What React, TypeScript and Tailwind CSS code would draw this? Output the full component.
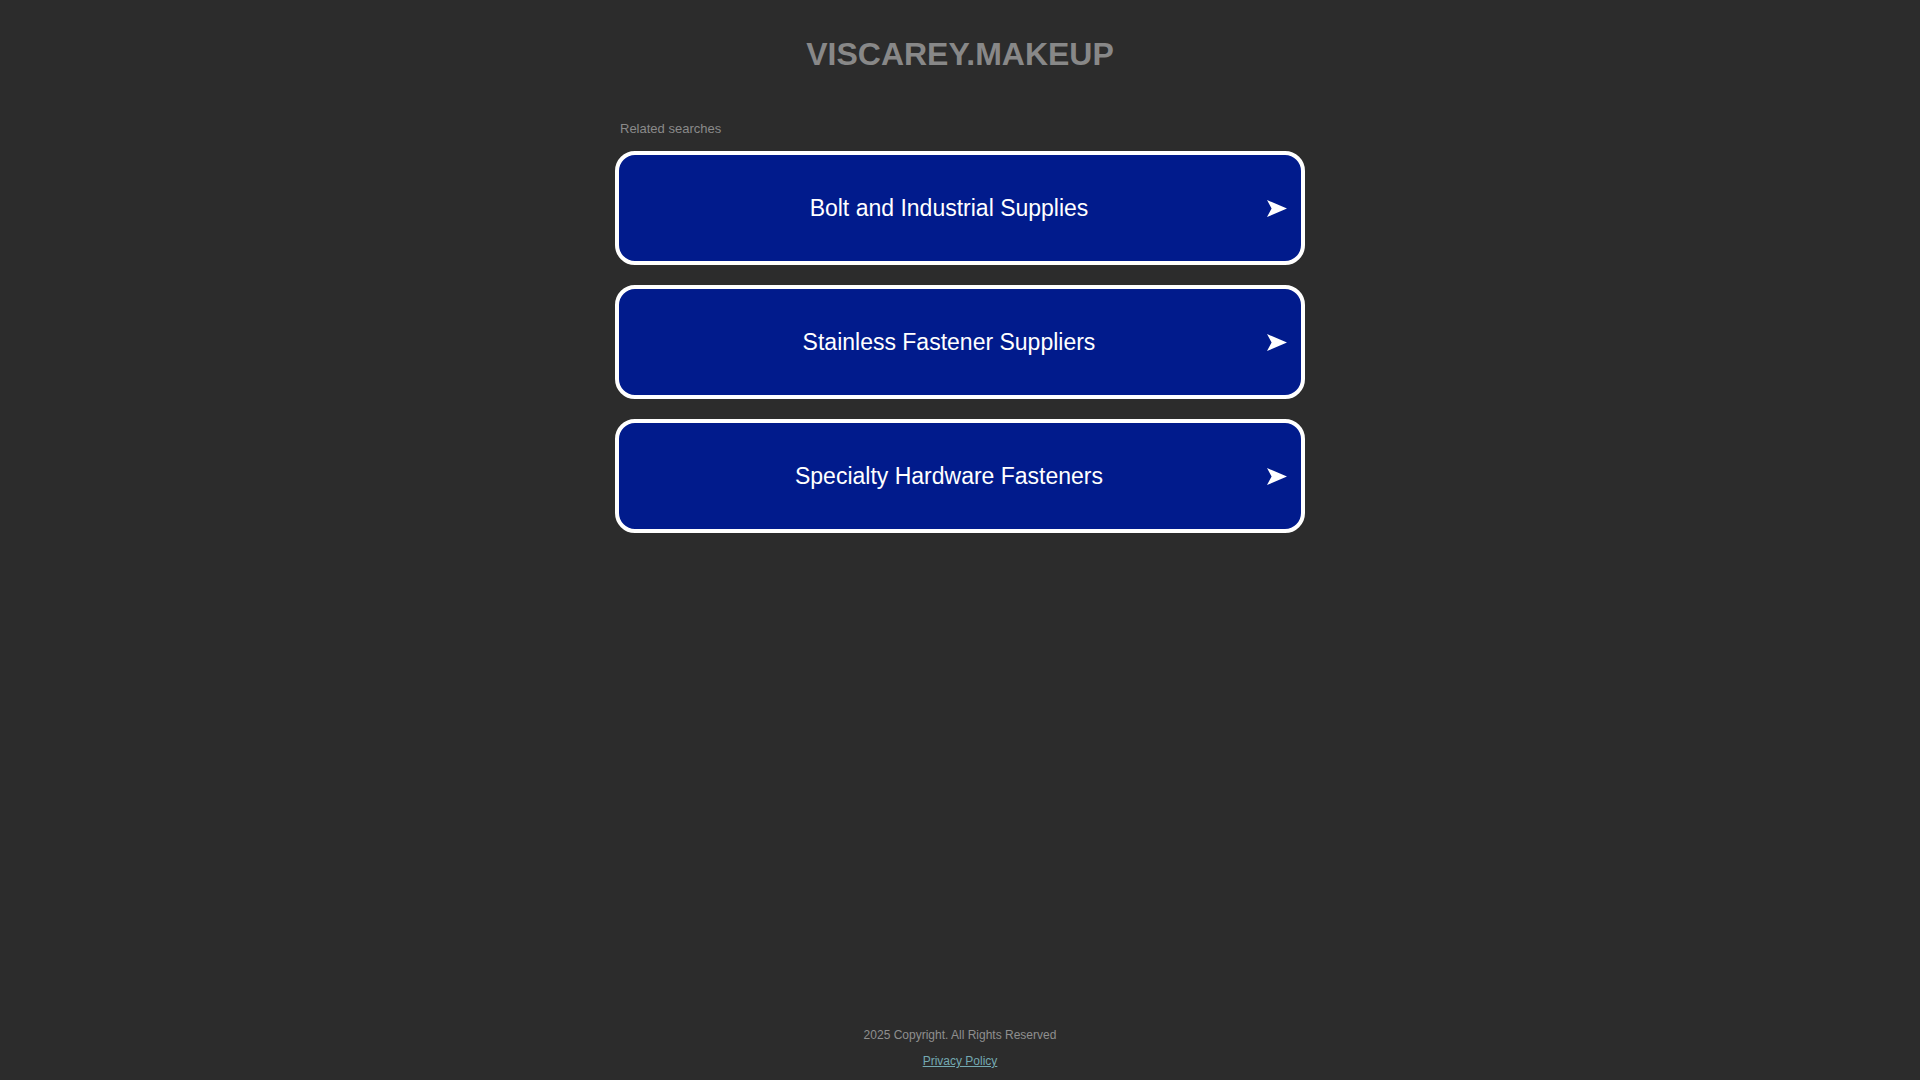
import React from "react";

const searches = [
  "Bolt and Industrial Supplies",
  "Stainless Fastener Suppliers",
  "Specialty Hardware Fasteners",
];

function Arrow() {
  return (
    <svg width="20" height="17" viewBox="0 0 20 17" className="shrink-0">
      <path d="M0 0 L20 8.5 L0 17 L4.6 8.5 Z" fill="#ffffff" />
    </svg>
  );
}

export default function App(): React.JSX.Element {
  return (
    <div className="min-h-screen bg-[#2c2c2c] flex flex-col items-center font-['Liberation_Sans',Arial,sans-serif]">
      <h1 className="mt-[36px] text-[32px] leading-[36px] font-bold text-[#888888]">
        VISCAREY.MAKEUP
      </h1>

      <div className="w-[690px] mt-[49px]">
        <p className="pl-[5px] mb-[14px] text-[13px] leading-[16px] text-[#8a8a8a]">
          Related searches
        </p>
        <div className="flex flex-col gap-[20px]">
          {searches.map((s, i) => (
            <a
              key={i}
              href="#"
              className="h-[114px] flex items-center pl-[12px] pr-[14px] bg-[#011b8c] border-4 border-white rounded-[20px] text-white"
            >
              <span className="flex-1 text-center text-[23px] leading-[28px]">{s}</span>
              <Arrow />
            </a>
          ))}
        </div>
      </div>

      <footer className="mt-auto pb-[11px] flex flex-col items-center gap-[10px] text-[12px] leading-[16px]">
        <p className="text-[#8f8f8f]">2025 Copyright. All Rights Reserved</p>
        <a href="#" className="text-[#74a9b2] underline">
          Privacy Policy
        </a>
      </footer>
    </div>
  );
}
